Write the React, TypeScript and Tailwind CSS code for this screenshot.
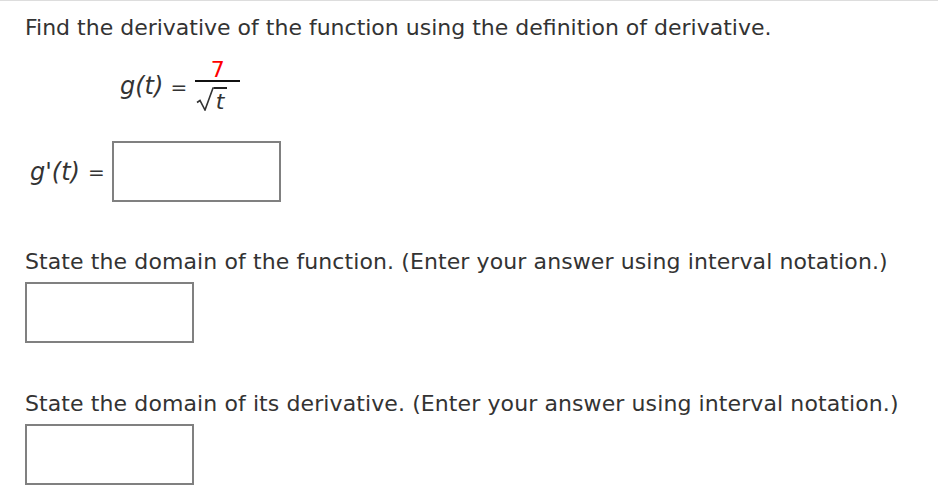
import React from "react";

function Box({ className = "" }: { className?: string }) {
  return <div className={`w-[169px] h-[61px] border-2 border-[#808080] bg-white ${className}`} />;
}

export default function App() {
  return (
    <div className="w-[938px] h-[497px] bg-white border-t border-[#dddddd] font-['DejaVu_Sans',Verdana,sans-serif] text-[#333333] overflow-hidden">
      <div className="pl-[25px]">
        <p className="pt-[14px] text-[22px] leading-[26px] whitespace-nowrap">
          Find the derivative of the function using the definition of derivative.
        </p>

        <div className="mt-[17px] ml-[95px] flex items-start h-[60px]">
          <span className="italic text-[24px] leading-[28px] mt-[14px]">g(t)</span>
          <span className="text-[20px] leading-[24px] ml-[7px] mt-[17px]">=</span>
          <div className="ml-[8px] flex flex-col items-center w-[45px]">
            <span className="mt-[2px] text-[22px] leading-[20px] text-[#ff0000]">7</span>
            <div className="w-[45px] h-[2px] bg-[#111111]" />
            <div className="flex items-start mt-[5px] ml-[-12px]">
              <svg width="18" height="24" viewBox="0 0 18 24" className="block">
                <path d="M1 15.5 L4 13.5 L9 23 L17 1 L18 1" fill="none" stroke="#333" strokeWidth="1.6" strokeLinejoin="miter" />
              </svg>
              <span className="italic text-[22px] leading-[22px] border-t-2 border-[#222] pl-[2px] pr-[3px] pt-[2px]">t</span>
            </div>
          </div>
        </div>

        <div className="mt-[23px] flex items-center">
          <span className="italic text-[24px] leading-[28px] ml-[5px]">g'(t)</span>
          <span className="text-[20px] leading-[24px] ml-[8px]">=</span>
          <Box className="ml-[7px]" />
        </div>

        <p className="mt-[47px] text-[22px] leading-[26px] whitespace-nowrap tracking-[0.1px]">
          State the domain of the function. (Enter your answer using interval notation.)
        </p>
        <Box className="mt-[7px]" />

        <p className="mt-[48px] text-[22px] leading-[26px] whitespace-nowrap tracking-[0.1px]">
          State the domain of its derivative. (Enter your answer using interval notation.)
        </p>
        <Box className="mt-[7px]" />
      </div>
    </div>
  );
}
